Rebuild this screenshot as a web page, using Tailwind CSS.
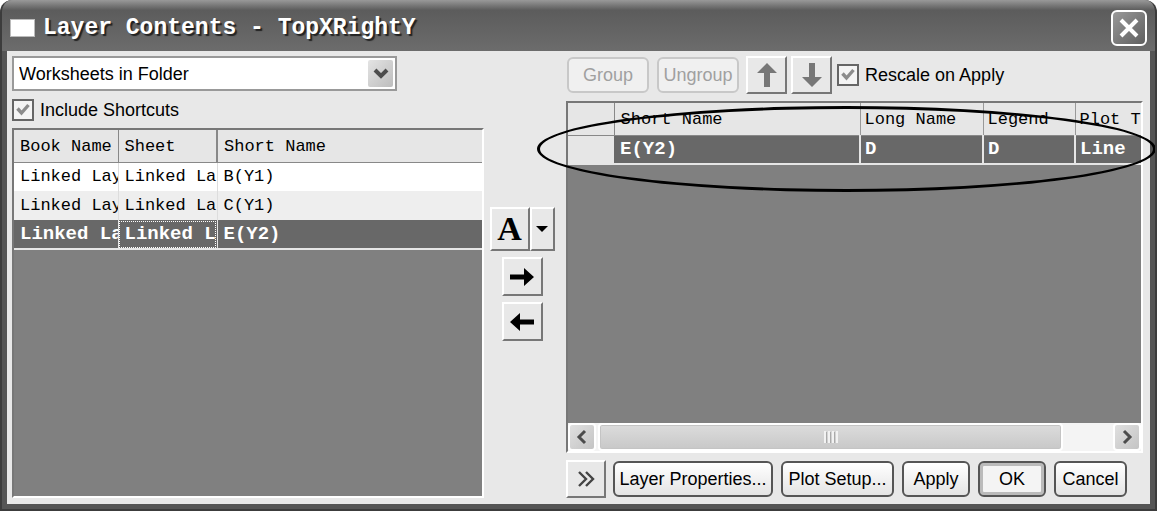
<!DOCTYPE html>
<html lang="en">
<head>
  <meta charset="UTF-8" />
  <meta name="viewport" content="width=device-width, initial-scale=1.0" />
  <title>Layer Contents - TopXRightY</title>
  <script src="https://cdn.jsdelivr.net/npm/@tailwindcss/browser@4"></script>
</head>

<body class="bg-white font-['Liberation_Sans',sans-serif] text-lg leading-6 text-black">

  <!-- Dialog window -->
  <main class="h-screen flex flex-col overflow-hidden rounded-t-xl bg-[#555] border-x-2 border-b-2 border-[#3c3c3c]">

    <!-- Title bar -->
    <header class="h-[51px] shrink-0 flex items-center gap-2 pl-2 pr-2 pt-1 bg-linear-to-b from-[#999] via-[#5c5c5c] via-20% to-[#6c6c6c]">
      <span class="w-[25px] h-[18px] bg-white border border-[#bbb]"></span>
      <h1 class="flex-1 font-['Liberation_Mono',monospace] font-bold text-[23px] leading-7 text-white [text-shadow:2px_2px_1px_#222]">Layer Contents - TopXRightY</h1>
      <button type="button" aria-label="Close" class="size-9 grid place-items-center rounded-md border-2 border-white bg-linear-to-br from-[#999] to-[#606060]">
        <svg class="size-6" viewBox="0 0 24 24" fill="none" stroke="#fff" stroke-width="4"><path d="M4 4l16 16M20 4L4 20" /></svg>
      </button>
    </header>

    <!-- Dialog body -->
    <div class="flex-1 min-h-0 mx-[5px] mb-[5px] pt-[5px] pb-1.5 pl-[5px] pr-[7px] grid grid-cols-[9fr_82px_11fr] bg-[#e8e8e8]">

      <!-- Available worksheets -->
      <section class="flex flex-col min-w-0 min-h-0">
        <div class="relative w-[385px] max-w-full">
          <select aria-label="Source" class="block w-full h-[35px] appearance-none bg-white border-2 border-[#999] pl-[5px]">
            <option>Worksheets in Folder</option>
          </select>
          <span class="pointer-events-none absolute right-1 inset-y-1 w-[25px] grid place-items-center rounded-xs bg-linear-to-br from-[#e4e4e4] to-[#bdbdbd]">
            <svg class="w-4 h-3" viewBox="0 0 16 12" fill="none" stroke="#4c4c4c" stroke-width="4"><path d="M2 2l6 6 6-6" /></svg>
          </span>
        </div>

        <label class="h-[37px] flex items-center gap-1.5">
          <span class="grid size-[22px]">
            <input type="checkbox" checked class="col-start-1 row-start-1 size-[22px] appearance-none bg-[#f4f4f4] border-2 border-[#666]" />
            <svg class="pointer-events-none col-start-1 row-start-1 size-[22px]" viewBox="0 0 22 22" fill="none" stroke="#8c8c8c" stroke-width="3.4"><path d="M5.500 9.500l4 4.500 7-8" /></svg>
          </span>
          Include Shortcuts
        </label>

        <div class="flex-1 min-h-0 overflow-hidden bg-[#808080] border-2 border-t-[#777] border-l-[#777] border-r-white border-b-white">
          <table class="w-full table-fixed border-collapse font-['Liberation_Mono',monospace] text-[17px] leading-6 text-left">
            <colgroup>
              <col class="w-[104px]" />
              <col class="w-[99px]" />
              <col />
            </colgroup>
            <thead>
              <tr class="h-8 bg-[#e6e6e6] border-b border-b-[#888]">
                <th class="pt-0.5 pl-1.5 font-normal whitespace-nowrap overflow-hidden border-r border-[#888]">Book Name</th>
                <th class="pt-0.5 pl-1.5 font-normal whitespace-nowrap overflow-hidden border-r-2 border-[#888]">Sheet</th>
                <th class="pt-0.5 pl-1.5 font-normal whitespace-nowrap overflow-hidden">Short Name</th>
              </tr>
            </thead>
            <tbody>
              <tr class="h-[29px] bg-white">
                <td class="pl-1.5 whitespace-nowrap overflow-hidden border-r border-[#ddd]">Linked Lay</td>
                <td class="pl-1.5 whitespace-nowrap overflow-hidden border-r border-[#ddd]">Linked La</td>
                <td class="pl-1.5 whitespace-nowrap overflow-hidden">B(Y1)</td>
              </tr>
              <tr class="h-[29px] bg-[#eee]">
                <td class="pl-1.5 whitespace-nowrap overflow-hidden border-r border-[#ddd]">Linked Lay</td>
                <td class="pl-1.5 whitespace-nowrap overflow-hidden border-r border-[#ddd]">Linked La</td>
                <td class="pl-1.5 whitespace-nowrap overflow-hidden">C(Y1)</td>
              </tr>
              <tr class="h-[29px] bg-[#686868] text-white text-[19px] font-bold border-b-2 border-[#e6e6e6]">
                <td class="pl-1.5 whitespace-nowrap overflow-hidden border-r border-[#e6e6e6]">Linked La</td>
                <td class="pl-1.5 whitespace-nowrap overflow-hidden border-r border-[#e6e6e6] outline-1 outline-dotted outline-white -outline-offset-2">Linked L</td>
                <td class="pl-1.5 whitespace-nowrap overflow-hidden">E(Y2)</td>
              </tr>
            </tbody>
          </table>
        </div>
      </section>

      <!-- Move buttons -->
      <section class="flex flex-col items-center pt-[151px] pr-1.5 gap-1.5">
        <div class="flex">
          <button type="button" class="w-10 h-11 border-2 border-t-white border-l-white border-r-[#777] border-b-[#777] font-['Liberation_Serif',serif] font-bold text-[34px] leading-9">A</button>
          <button type="button" aria-label="More plot options" class="w-[25px] h-11 grid place-items-center border-2 border-t-white border-l-white border-r-[#777] border-b-[#777]">
            <svg class="w-3 h-1.5" viewBox="0 0 12 6"><path d="M0 0h12L6 6z" /></svg>
          </button>
        </div>
        <button type="button" aria-label="Add to layer" class="w-[41px] h-[39px] grid place-items-center border-2 border-t-white border-l-white border-r-[#777] border-b-[#777]">
          <svg class="w-6 h-5" viewBox="0 0 24 20"><path d="M0 7.500h14V1l10 9-10 9v-6.500H0z" /></svg>
        </button>
        <button type="button" aria-label="Remove from layer" class="w-[41px] h-[39px] grid place-items-center border-2 border-t-white border-l-white border-r-[#777] border-b-[#777]">
          <svg class="w-6 h-5" viewBox="0 0 24 20"><path d="M24 7.500H10V1L0 10l10 9v-6.500h14z" /></svg>
        </button>
      </section>

      <!-- Layer contents -->
      <section class="flex flex-col min-w-0 min-h-0">
        <div class="h-[38px] mb-[7px] pl-px flex items-center">
          <button type="button" disabled class="w-[82px] h-9 mr-2 rounded-md border-2 border-[#c8c8c8] bg-[#f0f0f0] text-[#a0a0a0]">Group</button>
          <button type="button" disabled class="w-[82px] h-9 mr-[7px] rounded-md border-2 border-[#c8c8c8] bg-[#f0f0f0] text-[#a0a0a0]">Ungroup</button>
          <button type="button" aria-label="Move up" class="w-[41px] h-[38px] mr-1 grid place-items-center border-2 border-t-white border-l-white border-r-[#777] border-b-[#777]">
            <svg class="w-5 h-6" viewBox="0 0 20 24" fill="#777"><path d="M10 0l10 10h-7v14H7V10H0z" /></svg>
          </button>
          <button type="button" aria-label="Move down" class="w-[41px] h-[38px] mr-[5px] grid place-items-center border-2 border-t-white border-l-white border-r-[#777] border-b-[#777]">
            <svg class="w-5 h-6" viewBox="0 0 20 24" fill="#777"><path d="M10 24L0 14h7V0h6v14h7z" /></svg>
          </button>
          <label class="flex items-center gap-1.5 whitespace-nowrap">
            <span class="grid size-[22px]">
              <input type="checkbox" checked class="col-start-1 row-start-1 size-[22px] appearance-none bg-[#f4f4f4] border-2 border-[#666]" />
              <svg class="pointer-events-none col-start-1 row-start-1 size-[22px]" viewBox="0 0 22 22" fill="none" stroke="#8c8c8c" stroke-width="3.4"><path d="M5.500 9.500l4 4.500 7-8" /></svg>
            </span>
            Rescale on Apply
          </label>
        </div>

        <div class="relative flex-1 min-h-0 flex flex-col bg-[#808080] border-2 border-t-[#777] border-l-[#777] border-r-white border-b-white">
          <div class="flex-1 min-h-0 overflow-hidden">
            <table class="w-full table-fixed border-collapse font-['Liberation_Mono',monospace] text-[17px] leading-6 text-left">
              <colgroup>
                <col class="w-[46px]" />
                <col />
                <col class="w-[123px]" />
                <col class="w-[92px]" />
                <col class="w-[66px]" />
              </colgroup>
              <thead>
                <tr class="h-8 bg-[#e6e6e6] border-b border-b-[#888]">
                  <th class="border-r border-[#888]"></th>
                  <th class="pt-0.5 pl-1.5 font-normal whitespace-nowrap overflow-hidden border-r border-[#999]">Short Name</th>
                  <th class="pt-0.5 pl-1 font-normal whitespace-nowrap overflow-hidden border-r border-[#999]">Long Name</th>
                  <th class="pt-0.5 pl-1 font-normal whitespace-nowrap overflow-hidden border-r border-[#999]">Legend</th>
                  <th class="pt-0.5 pl-1 font-normal whitespace-nowrap overflow-hidden">Plot T</th>
                </tr>
              </thead>
              <tbody>
                <tr class="h-[29px] bg-[#686868] text-white text-[19px] font-bold border-b-2 border-[#e6e6e6]">
                  <td class="bg-[#e6e6e6]"></td>
                  <td class="pl-1.5 whitespace-nowrap overflow-hidden border-r-2 border-[#e6e6e6]">E(Y2)</td>
                  <td class="pl-1 whitespace-nowrap overflow-hidden border-r-2 border-[#e6e6e6]">D</td>
                  <td class="pl-1 whitespace-nowrap overflow-hidden border-r-2 border-[#e6e6e6]">D</td>
                  <td class="pl-1 whitespace-nowrap overflow-hidden">Line</td>
                </tr>
              </tbody>
            </table>
          </div>

          <!-- Horizontal scroll bar -->
          <div class="h-7 shrink-0 flex gap-0.5 bg-[#f4f4f4]">
            <button type="button" aria-label="Scroll left" class="w-7 grid place-items-center rounded-sm border-2 border-white bg-linear-to-br from-[#e0e0e0] to-[#c4c4c4]">
              <svg class="w-3 h-4" viewBox="0 0 12 16" fill="none" stroke="#4c4c4c" stroke-width="3"><path d="M9 2L3 8l6 6" /></svg>
            </button>
            <div class="w-[465px] grid place-items-center rounded-sm border-2 border-white ring-1 ring-inset ring-[#c4c4c4] bg-linear-to-b from-[#dcdcdc] to-[#c8c8c8]">
              <svg class="w-[14px] h-3" viewBox="0 0 14 12"><path d="M0 0h2v12H0zM4 0h2v12H4zM8 0h2v12H8zM12 0h2v12h-2z" fill="#f2f2f2" /><path d="M2 1h1v11H2zM6 1h1v11H6zM10 1h1v11h-1z" fill="#aaa" /></svg>
            </div>
            <button type="button" aria-label="Scroll right" class="w-7 ml-auto grid place-items-center rounded-sm border-2 border-white bg-linear-to-br from-[#e0e0e0] to-[#c4c4c4]">
              <svg class="w-3 h-4" viewBox="0 0 12 16" fill="none" stroke="#4c4c4c" stroke-width="3"><path d="M3 2l6 6-6 6" /></svg>
            </button>
          </div>

          <!-- Ring round the selected plot -->
          <div class="pointer-events-none absolute -left-[31px] -right-[15px] top-[3px] h-[86px] rounded-[50%] border-3 border-black"></div>
        </div>

        <div class="mt-[7px] h-[38px] flex items-center gap-2">
          <button type="button" aria-label="Expand" class="w-10 h-[38px] -mr-px grid place-items-center border-2 border-t-white border-l-white border-r-[#777] border-b-[#777]">
            <svg class="w-[18px] h-4" viewBox="0 0 18 16" fill="none" stroke="#444" stroke-width="2.400"><path d="M2 1l7 7-7 7M9 1l7 7-7 7" /></svg>
          </button>
          <button type="button" class="w-40 h-9 whitespace-nowrap rounded-md border-2 border-[#555] bg-linear-to-b from-white to-[#e4e4e4]">Layer Properties...</button>
          <button type="button" class="w-[113px] h-9 whitespace-nowrap rounded-md border-2 border-[#555] bg-linear-to-b from-white to-[#e4e4e4]">Plot Setup...</button>
          <button type="button" class="w-[68px] h-9 rounded-md border-2 border-[#555] bg-linear-to-b from-white to-[#e4e4e4]">Apply</button>
          <button type="button" class="w-[68px] h-9 rounded-md border-2 border-[#555] bg-[#f4f4f4] shadow-[inset_0_0_0_3px_#bbb]">OK</button>
          <button type="button" class="w-[73px] h-9 rounded-md border-2 border-[#555] bg-linear-to-b from-white to-[#e4e4e4]">Cancel</button>
        </div>
      </section>
    </div>
  </main>

</body>
</html>
